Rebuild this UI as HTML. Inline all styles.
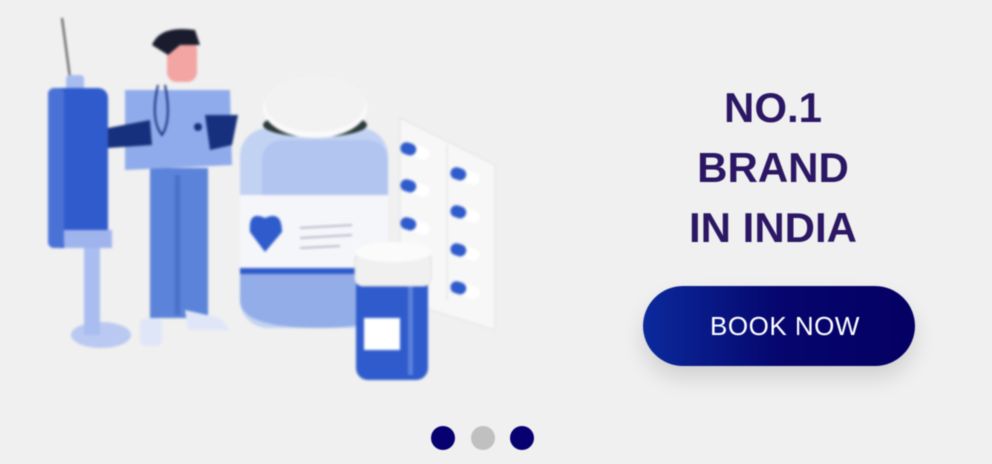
<!DOCTYPE html>
<html><head><meta charset="utf-8"><style>
html,body{margin:0;padding:0;}
body{width:992px;height:464px;background:#f0f0f0;position:relative;overflow:hidden;font-family:"Liberation Sans",sans-serif;}
.h{position:absolute;left:600px;width:346px;text-align:center;color:#2b1763;font-weight:bold;font-size:42px;line-height:60px;top:78px;filter:blur(.6px)}
.btn{position:absolute;left:643px;top:286px;width:272px;height:80px;border-radius:40px;background:linear-gradient(90deg,#0b2a9c 0%,#06066e 50%,#050063 100%);color:#fff;font-size:26px;letter-spacing:0.5px;text-align:center;line-height:80px;box-shadow:0 12px 22px rgba(0,0,0,.13);filter:blur(.5px)}
.btn span{position:relative;left:6px}
.d{position:absolute;top:426px;width:24px;height:24px;border-radius:50%;background:#070070;filter:blur(.6px)}
svg{position:absolute;left:0;top:0;filter:blur(1.2px)}
</style></head><body>
<svg width="560" height="400" viewBox="0 0 560 400">
<line x1="62" y1="18" x2="70" y2="78" stroke="#555" stroke-width="2"/>
<ellipse cx="101" cy="335" rx="30" ry="13" fill="#b9c9f1"/>
<rect x="84" y="240" width="16" height="95" fill="#a9bdf0"/>
<rect x="66" y="75" width="18" height="22" rx="4" fill="#a7bbef"/>
<rect x="48" y="88" width="60" height="160" rx="10" fill="#2f5bcc"/>
<rect x="48" y="88" width="16" height="160" rx="6" fill="#4a72d6"/>
<rect x="64" y="230" width="48" height="18" fill="#9fb4ec"/>
<rect x="150" y="168" width="58" height="150" fill="#5b83d9"/>
<rect x="175" y="175" width="5" height="140" fill="#4a70c8"/>
<path d="M125 90 L230 90 L232 165 L125 170 Z" fill="#8fabeb"/>
<path d="M108 128 L150 120 L152 145 L108 148 Z" fill="#17307d"/>
<path d="M205 115 L238 115 L232 145 L210 150 Z" fill="#17307d"/>
<path d="M158 85 Q150 120 162 135 Q172 120 165 85" fill="none" stroke="#17307d" stroke-width="2"/>
<circle cx="198" cy="127" r="4" fill="#17307d"/>
<rect x="167" y="40" width="30" height="42" rx="10" fill="#f2a5a2"/>
<path d="M152 45 Q160 25 195 30 L200 45 L180 45 L168 55 Z" fill="#1a1c2e"/>
<rect x="140" y="318" width="22" height="28" rx="6" fill="#dfe6f8"/>
<path d="M185 310 L220 318 L230 330 L188 330 Z" fill="#dfe6f8"/>
<rect x="240" y="128" width="148" height="200" rx="28" fill="#c2d2f2"/>
<rect x="262" y="140" width="126" height="185" rx="20" fill="#b2c5f0"/>
<rect x="240" y="195" width="148" height="75" fill="#f5f6fa"/>
<rect x="240" y="268" width="148" height="6" fill="#2f5bcc"/>
<path d="M240 274 L388 274 L388 300 Q388 328 320 328 Q240 328 240 300 Z" fill="#93ade8"/>
<path d="M265 252 L250 232 Q248 210 265 218 Q282 210 282 232 Z" fill="#2f5bcc"/>
<line x1="300" y1="228" x2="352" y2="225" stroke="#aab" stroke-width="1.5"/>
<line x1="300" y1="238" x2="352" y2="235" stroke="#aab" stroke-width="1.5"/>
<line x1="300" y1="248" x2="340" y2="246" stroke="#aab" stroke-width="1.5"/>
<ellipse cx="315" cy="125" rx="52" ry="12" fill="#2c3a3a"/>
<ellipse cx="315" cy="108" rx="52" ry="30" fill="#fafafa"/>
<ellipse cx="315" cy="104" rx="50" ry="28" fill="#f2f2f2"/>
<path d="M400 118 L495 165 L495 330 L400 300 Z" fill="#f7f7f7" stroke="#e2e2e2"/>
<line x1="447" y1="145" x2="447" y2="300" stroke="#e0e0e0"/>
<g>
<g transform="rotate(18 415 151)"><rect x="400" y="145" width="30" height="12" rx="6" fill="#fff"/><rect x="400" y="145" width="16" height="12" rx="6" fill="#2f5bcc"/></g>
<g transform="rotate(18 415 188)"><rect x="400" y="182" width="30" height="12" rx="6" fill="#fff"/><rect x="400" y="182" width="16" height="12" rx="6" fill="#2f5bcc"/></g>
<g transform="rotate(18 415 226)"><rect x="400" y="220" width="30" height="12" rx="6" fill="#fff"/><rect x="400" y="220" width="16" height="12" rx="6" fill="#2f5bcc"/></g>
<g transform="rotate(18 465 176)"><rect x="450" y="170" width="30" height="12" rx="6" fill="#fff"/><rect x="450" y="170" width="16" height="12" rx="6" fill="#2f5bcc"/></g>
<g transform="rotate(18 465 214)"><rect x="450" y="208" width="30" height="12" rx="6" fill="#fff"/><rect x="450" y="208" width="16" height="12" rx="6" fill="#2f5bcc"/></g>
<g transform="rotate(18 465 252)"><rect x="450" y="246" width="30" height="12" rx="6" fill="#fff"/><rect x="450" y="246" width="16" height="12" rx="6" fill="#2f5bcc"/></g>
<g transform="rotate(18 465 290)"><rect x="450" y="284" width="30" height="12" rx="6" fill="#fff"/><rect x="450" y="284" width="16" height="12" rx="6" fill="#2f5bcc"/></g>
</g>
<rect x="356" y="275" width="72" height="105" rx="12" fill="#2f5bcc"/>
<rect x="364" y="318" width="36" height="32" fill="#fff"/>
<rect x="408" y="285" width="5" height="90" fill="#5a80da"/>
<rect x="355" y="252" width="76" height="34" rx="8" fill="#f0f0f0" stroke="#ddd"/>
<ellipse cx="393" cy="252" rx="38" ry="10" fill="#fbfbfb"/>
</svg>
<div class="h">NO.1<br>BRAND<br>IN INDIA</div>
<div class="btn"><span>BOOK NOW</span></div>
<div class="d" style="left:431px"></div>
<div class="d" style="left:471px;background:#c0c0c0"></div>
<div class="d" style="left:510px"></div>
</body></html>
